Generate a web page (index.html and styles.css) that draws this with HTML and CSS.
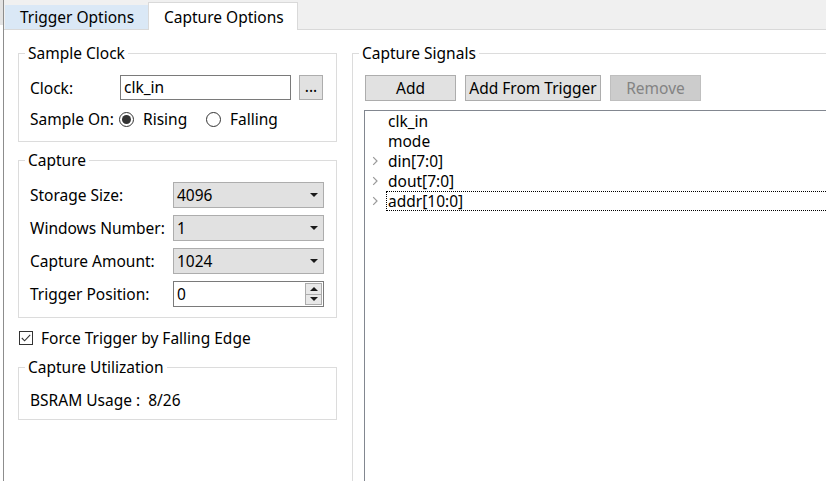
FILE: index.html
```html
<!DOCTYPE html>
<html>
<head>
<meta charset="utf-8">
<link rel="stylesheet" href="styles.css">
</head>
<body>
<div class="app">
  <div class="edge"><div class="edge-top"></div></div>
  <div class="main">
    <div class="tabbar">
      <div class="tab tab-hover">Trigger Options</div>
      <div class="tab tab-active">Capture Options</div>
    </div>
    <div class="content">
      <div class="left">
        <fieldset class="group g-clock">
          <legend>Sample Clock</legend>
          <div class="body">
            <div class="row r-clock">
              <span class="lbl lbl-clock">Clock:</span>
              <div class="input">clk_in</div>
              <div class="btn-dots">...</div>
            </div>
            <div class="row r-sample">
              <span class="lbl lbl-sample">Sample On:</span>
              <span class="opt opt-first"><span class="radio checked"></span>Rising</span>
              <span class="opt"><span class="radio"></span>Falling</span>
            </div>
          </div>
        </fieldset>

        <fieldset class="group g-capture">
          <legend>Capture</legend>
          <div class="body">
            <div class="row r-field">
              <span class="lbl lbl-cap">Storage Size:</span>
              <div class="combo"><span>4096</span><span class="caret"></span></div>
            </div>
            <div class="row r-field">
              <span class="lbl lbl-cap">Windows Number:</span>
              <div class="combo"><span>1</span><span class="caret"></span></div>
            </div>
            <div class="row r-field">
              <span class="lbl lbl-cap">Capture Amount:</span>
              <div class="combo"><span>1024</span><span class="caret"></span></div>
            </div>
            <div class="row r-field r-last">
              <span class="lbl lbl-cap">Trigger Position:</span>
              <div class="spin">
                <span class="spin-val">0</span>
                <span class="spin-btns">
                  <span class="spin-btn"><span class="tri-up"></span></span>
                  <span class="spin-btn"><span class="tri-down"></span></span>
                </span>
              </div>
            </div>
          </div>
        </fieldset>

        <div class="check-row">
          <span class="checkbox">
            <svg width="12" height="12" viewBox="0 0 12 12"><path d="M1.8 6 L4.6 8.8 L10.2 2.8" fill="none" stroke="#333" stroke-width="1.1"/></svg>
          </span>
          <span>Force Trigger by Falling Edge</span>
        </div>

        <fieldset class="group g-util">
          <legend>Capture Utilization</legend>
          <div class="body">
            <div class="util-row">BSRAM Usage :&nbsp; 8/26</div>
          </div>
        </fieldset>
      </div>

      <div class="right">
        <fieldset class="group g-signals">
          <legend>Capture Signals</legend>
          <div class="body body-signals">
            <div class="btns">
              <div class="btn btn-add">Add</div>
              <div class="btn btn-trigger">Add From Trigger</div>
              <div class="btn btn-remove">Remove</div>
            </div>
            <div class="tree">
              <div class="node"><span class="arrow"></span><span class="txt">clk_in</span></div>
              <div class="node"><span class="arrow"></span><span class="txt">mode</span></div>
              <div class="node"><span class="arrow"><svg width="7" height="10" viewBox="0 0 7 10"><path d="M1.2 1.2 L5 5 L1.2 8.8" fill="none" stroke="#9a9a9a" stroke-width="1.2"/></svg></span><span class="txt">din[7:0]</span></div>
              <div class="node"><span class="arrow"><svg width="7" height="10" viewBox="0 0 7 10"><path d="M1.2 1.2 L5 5 L1.2 8.8" fill="none" stroke="#9a9a9a" stroke-width="1.2"/></svg></span><span class="txt">dout[7:0]</span></div>
              <div class="node node-focus"><span class="arrow"><svg width="7" height="10" viewBox="0 0 7 10"><path d="M1.2 1.2 L5 5 L1.2 8.8" fill="none" stroke="#9a9a9a" stroke-width="1.2"/></svg></span><span class="txt">addr[10:0]</span></div>
            </div>
          </div>
        </fieldset>
      </div>
    </div>
  </div>
</div>
</body>
</html>
```

FILE: styles.css
```css
* { box-sizing: border-box; }

html, body {
  margin: 0;
  width: 826px;
  height: 481px;
  overflow: hidden;
  background: #fff;
}

body {
  font-family: "Noto Sans", "Open Sans", sans-serif;
  font-size: 15.5px;
  color: #000;
}

.app {
  display: flex;
  height: 481px;
}

.edge {
  width: 3px;
  flex: none;
}

.edge-top {
  height: 25px;
  background: #e3e3e3;
}

.main {
  flex: 1;
  min-width: 0;
  border-left: 1px solid #8d8d8d;
  display: flex;
  flex-direction: column;
}

/* Tabs */
.tabbar {
  height: 30px;
  flex: none;
  background: #f0f0f0;
  border-bottom: 1px solid #d9d9d9;
  display: flex;
  align-items: flex-end;
  padding-left: 1px;
}

.tab {
  display: flex;
  align-items: center;
  padding-left: 15px;
  line-height: 20px;
  white-space: nowrap;
}

.tab-hover {
  width: 143px;
  height: 24px;
  background: #dae8f6;
}

.tab-active {
  width: 150px;
  height: 28px;
  background: #fff;
  border: 1px solid #d9d9d9;
  border-bottom: none;
  margin-bottom: -1px;
  position: relative;
}

/* Content */
.content {
  flex: 1;
  display: flex;
  padding: 13px 0 0 14px;
  min-height: 0;
}

.left {
  width: 319px;
  flex: none;
}

.right {
  flex: 1;
  margin-left: 15px;
  margin-right: -30px;
  margin-bottom: -20px;
  display: flex;
  flex-direction: column;
}

fieldset.group {
  margin: 0;
  padding: 0;
  border: 1px solid #dcdcdc;
  min-width: 0;
}

fieldset.group legend {
  margin-left: 6px;
  padding: 0 3px;
  height: 20px;
  line-height: 20px;
}

.row {
  display: flex;
  align-items: center;
  white-space: nowrap;
}

.lbl { flex: none; }

/* Sample clock */
.g-clock .body {
  padding: 12px 12px 11px 11px;
}

.r-clock { height: 25px; }
.lbl-clock { width: 90px; }

.input {
  width: 171px;
  height: 25px;
  border: 1px solid #7a7a7a;
  padding-left: 3px;
  line-height: 22px;
}

.btn-dots {
  width: 24px;
  height: 25px;
  margin-left: 8px;
  background: #e1e1e1;
  border: 1px solid #adadad;
  text-align: center;
  line-height: 20px;
}

.r-sample {
  height: 22px;
  margin-top: 8px;
}

.lbl-sample { width: 89px; }

.opt {
  display: flex;
  align-items: center;
}

.opt-first { width: 87px; }

.radio {
  width: 15px;
  height: 15px;
  border-radius: 50%;
  border: 1px solid #333;
  margin-right: 9px;
  display: flex;
  align-items: center;
  justify-content: center;
}

.radio.checked::after {
  content: "";
  width: 9px;
  height: 9px;
  border-radius: 50%;
  background: #333;
}

/* Capture */
fieldset.g-capture { margin-top: 8px; }

.g-capture .body {
  padding: 12px 12px 10px 11px;
}

.r-field {
  height: 26px;
  margin-bottom: 7px;
}

.r-field.r-last { margin-bottom: 0; }

.lbl-cap { width: 143px; }

.combo {
  width: 151px;
  height: 26px;
  background: #e1e1e1;
  border: 1px solid #adadad;
  padding: 0 5px 0 3px;
  display: flex;
  align-items: center;
  justify-content: space-between;
}

.caret {
  width: 0;
  height: 0;
  border-left: 4px solid transparent;
  border-right: 4px solid transparent;
  border-top: 4px solid #1a1a1a;
}

.spin {
  width: 151px;
  height: 26px;
  border: 1px solid #7a7a7a;
  background: #fff;
  padding: 1px 1px 1px 3px;
  display: flex;
  align-items: center;
  justify-content: space-between;
}

.spin-btns {
  display: flex;
  flex-direction: column;
  width: 17px;
  height: 22px;
}

.spin-btn {
  flex: 1;
  border: 1px solid #acacac;
  background: #e8e8e8;
  display: flex;
  align-items: center;
  justify-content: center;
}

.spin-btn + .spin-btn { border-top: none; }

.tri-up, .tri-down {
  width: 0;
  height: 0;
  border-left: 4px solid transparent;
  border-right: 4px solid transparent;
}

.tri-up { border-bottom: 4px solid #1a1a1a; }
.tri-down { border-top: 4px solid #1a1a1a; }

/* Checkbox */
.check-row {
  display: flex;
  align-items: center;
  height: 20px;
  margin: 10px 0 9px 1px;
  white-space: nowrap;
}

.checkbox {
  width: 14px;
  height: 14px;
  border: 1px solid #333;
  margin-right: 8px;
  display: flex;
  align-items: center;
  justify-content: center;
}

.checkbox svg { display: block; }

/* Utilization */
.g-util .body {
  padding: 13px 12px 9px 11px;
}

.util-row {
  height: 20px;
  line-height: 20px;
  white-space: nowrap;
}

/* Signals */
.g-signals {
  flex: 1;
  display: flex;
  flex-direction: column;
}

.body-signals {
  flex: 1;
  padding: 12px 0 0 12px;
  display: flex;
  flex-direction: column;
}

.btns {
  display: flex;
  gap: 9px;
}

.btn {
  height: 26px;
  background: #e1e1e1;
  border: 1px solid #adadad;
  display: flex;
  align-items: center;
  justify-content: center;
  white-space: nowrap;
}

.btn-add { width: 91px; }
.btn-trigger { width: 136px; }
.btn-remove {
  width: 91px;
  background: #cccccc;
  border-color: #bfbfbf;
  color: #838383;
}

.tree {
  flex: 1;
  margin-top: 9px;
  margin-left: -1px;
  border: 1px solid #828790;
}

.node {
  height: 20px;
  display: flex;
  align-items: center;
  white-space: nowrap;
}

.arrow {
  width: 21px;
  padding-left: 7px;
  flex: none;
  display: flex;
  align-items: center;
}

.arrow svg { display: block; }

.txt {
  flex: 1;
  height: 20px;
  line-height: 20px;
  padding-left: 2px;
}

.node-focus .txt {
  outline: 1px dotted #000;
  outline-offset: -1px;
}
```
